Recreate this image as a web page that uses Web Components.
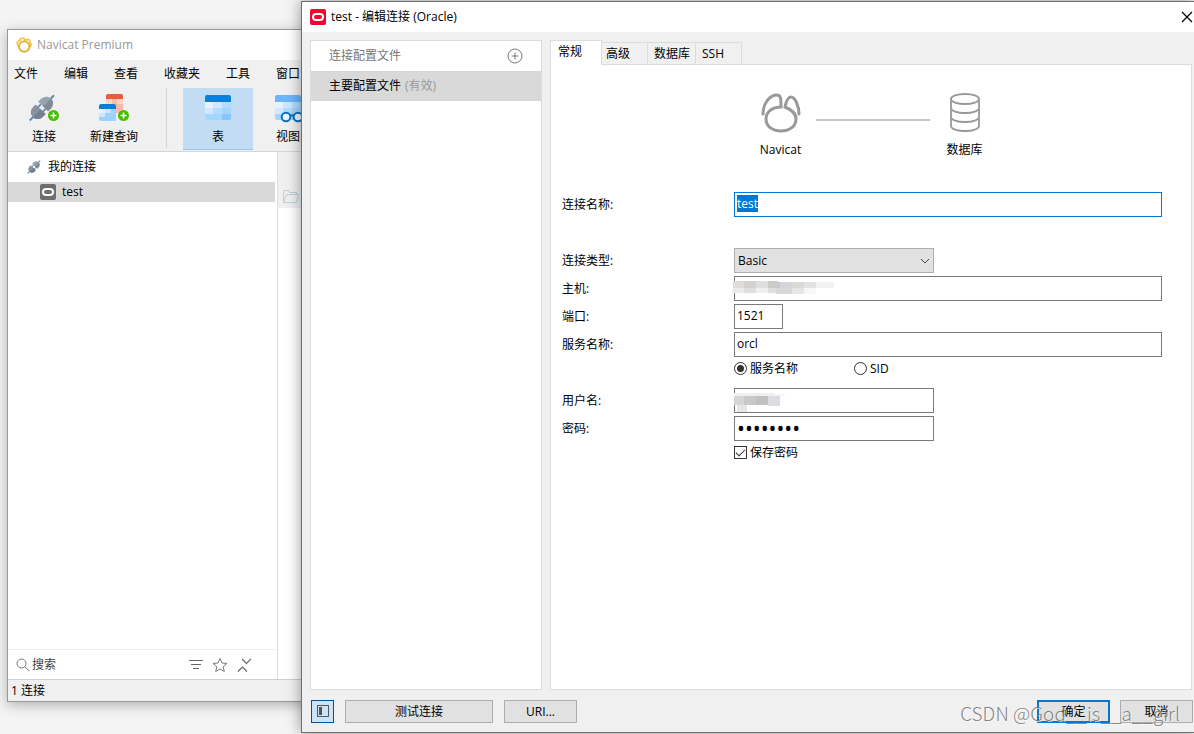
<!DOCTYPE html>
<html lang="zh-CN">
<head>
<meta charset="utf-8">
<meta name="viewport" content="width=device-width, initial-scale=1">
<title>Navicat Premium</title>
<style>
html, body { margin: 0; height: 100%; }
body {
  position: relative; overflow: hidden; background: #f4f4f4; color: #000;
  font: 12px/16px "Open Sans", "Noto Sans CJK SC", sans-serif;
}
main-window { position: absolute; inset: 29px 0 32px 7px; }
connection-dialog { position: absolute; inset: 1px 0 1px 301px; }
water-mark { position: absolute; right: 14px; bottom: 7px; }
</style>
</head>
<body>
<main-window></main-window>
<connection-dialog></connection-dialog>
<water-mark>CSDN @God__is__a__girl</water-mark>

<script>
class Base extends HTMLElement {
  constructor() {
    super();
    this.attachShadow({ mode: 'open' });
  }
  connectedCallback() {
    if (this.shadowRoot.childNodes.length) return;
    this.shadowRoot.innerHTML = '<style>*{box-sizing:border-box}:host([hidden]){display:none}</style>' + this.render();
    this.ready();
  }
  attr(name, fallback = '') { return this.getAttribute(name) ?? fallback; }
  ready() {}
}
const define = (name, cls) => customElements.define(name, cls);

/* ---------- icons ---------- */
const paw = 'M2 21C2 10 9 2 16 2C20 2 20 6 20 14C11 14 5 19 5 26C5 33 11 38 20 38C29 38 35 33 35 26C35 20 31 17 24 14C25 9 27 4 30 4C34 4 38 13 38 21';
const plug = `
  <g transform="rotate(-46 14 14)">
    <path d="M-5 14h6M27 14h6" stroke="#5b8db8" stroke-width="2.2"/>
    <path d="M11 10.500h5M11 17.500h5" stroke="#5b8db8" stroke-width="2"/>
    <path d="M12 6.500v15H8C3.500 21.500 0 18.500 0 14s3.500-7.500 8-7.500z" fill="#8793a0"/>
    <path d="M12 14v7.500H8C3.500 21.500 0 18.500 0 14z" fill="#74818e"/>
    <path d="M16 6.500v15h4c4.500 0 8-3 8-7.500s-3.500-7.500-8-7.500z" fill="#98a3ae"/>
    <path d="M16 14v7.500h4c4.500 0 8-3 8-7.500z" fill="#7f8c98"/>
  </g>`;
const plus = (x, y) => `<circle cx="${x}" cy="${y}" r="5.500" fill="#43c000"/><path d="M${x - 3} ${y}h6M${x} ${y - 3}v6" stroke="#fff" stroke-width="1.500"/>`;
const grid = `
  <path d="M0 7h26v16a2 2 0 0 1-2 2H2a2 2 0 0 1-2-2z" fill="#a3d5ff"/>
  <path d="M0 7h8.500v6H0z" fill="#e6f3ff"/><path d="M8.500 7H17v6H8.500zM0 13h8.500v6H0z" fill="#cfe8ff"/>
  <path d="M17 7h9v6h-9zM8.500 13H17v6H8.500z" fill="#b3dbff"/><path d="M17 19h9v4a2 2 0 0 1-2 2h-7z" fill="#85c4fc"/>`;
const icons = {
  navicat: ['0 0 40 40', `<path d="${paw}" fill="none" stroke="#999" stroke-width="3" stroke-linecap="round"/>`],
  logo: ['0 0 16 16', `<g fill="none" stroke-width="1.900"><path d="M3.200 9.200C0 7.500 .8 3.600 3.900 3.600C4.300 .4 9.200 .2 9 4M9.200 3.600C11.500 1.200 14.500 3 13.600 5.200C15.800 6.600 15.200 9.500 13.400 10.200" stroke="#f3cb4c"/><circle cx="8.200" cy="9.600" r="5.200" stroke="#e3b23c"/></g>`],
  database: ['0 0 30 40', `<g fill="none" stroke="#999" stroke-width="1.800"><ellipse cx="15" cy="6" rx="14" ry="5"/><path d="M1 6v27c0 2.800 6.300 5 14 5s14-2.200 14-5V6M1 15c0 2.800 6.300 5 14 5s14-2.200 14-5M1 24c0 2.800 6.300 5 14 5s14-2.200 14-5"/></g>`],
  connect: ['0 0 32 30', `<g transform="translate(1 1) scale(.92)">${plug}</g>${plus(25.5, 21.5)}`],
  plug: ['-3 -3 34 34', plug],
  query: ['0 0 32 30', `
    <path d="M8 5h17v12a2 2 0 0 1-2 2H8z" fill="#ffb8a3"/><path d="M8 5h6v6H8zM19 5h6v5h-6z" fill="#ffd5c9"/>
    <path d="M10 0h13a2 2 0 0 1 2 2v3H8V2a2 2 0 0 1 2-2z" fill="#e85c3b"/>
    <path d="M1 15h17v12H3a2 2 0 0 1-2-2z" fill="#9bd1ff"/><path d="M1 15h6v4H1z" fill="#e6f3ff"/><path d="M7 15h6v4H7zM1 19h6v4H1z" fill="#cbe6ff"/>
    <path d="M3 10h13a2 2 0 0 1 2 2v3H1v-3a2 2 0 0 1 2-2z" fill="#0b7ed6"/>${plus(25.5, 21.5)}`],
  table: ['-3 -1 32 30', `${grid}<path d="M2 0h22a2 2 0 0 1 2 2v5H0V2a2 2 0 0 1 2-2z" fill="#0a80d8"/>`],
  view: ['-3 -1 32 30', `${grid}<path d="M2 0h22a2 2 0 0 1 2 2v5H0V2a2 2 0 0 1 2-2z" fill="#6bb7fb"/>
    <g fill="#f0f8ff" stroke="#0a72c4" stroke-width="2"><circle cx="11" cy="22" r="4.300"/><circle cx="23" cy="22" r="4.300"/><path d="M15 21q2-1.500 4 0" fill="none"/></g>`],
  oracle: ['0 0 16 16', `<rect width="16" height="16" rx="2" fill="#f8002f"/><rect x="3" y="5" width="10" height="6" rx="3" fill="none" stroke="#fff" stroke-width="2"/>`],
  oraclegray: ['0 0 16 16', `<rect width="16" height="16" rx="2" fill="#6e6e6e"/><rect x="3" y="5" width="10" height="6" rx="3" fill="none" stroke="#fff" stroke-width="2"/>`],
  folder: ['0 0 16 16', `<path d="M.5 14.500v-12h5l1 2h7v2M.5 14.500l3-8h12l-2 8z" fill="none" stroke="#bcd0dd"/>`],
  search: ['0 0 14 14', `<g fill="none" stroke="#777"><circle cx="5.500" cy="5.500" r="4.500"/><path d="M9 9l4.500 4"/></g>`],
  filter: ['0 0 14 14', `<path d="M0 2.500h14M2 6.500h10M4 10.500h6" stroke="#666"/>`],
  star: ['0 0 16 16', `<path d="M8 1.500l2 4.500 4.800.4-3.700 3.200 1.200 4.900L8 12l-4.300 2.500 1.200-4.900L1.200 6.400 6 6z" fill="none" stroke="#777"/>`],
  collapse: ['0 0 14 14', `<path d="M5 1l4.500 4.500L14 1M1 13.500L5.500 9l4.500 4.500" fill="none" stroke="#666" stroke-width="1.200"/>`],
  add: ['0 0 16 16', `<g fill="none" stroke="#777"><circle cx="8" cy="8" r="7"/><path d="M4.500 8h7M8 4.500v7"/></g>`],
  close: ['0 0 12 12', `<path d="M1 1l10 10M11 1L1 11" stroke="#000" stroke-width="1.200"/>`],
  panel: ['0 0 12 12', `<rect x=".5" y=".5" width="11" height="11" fill="none" stroke="#555"/><path d="M2 2h3v8H2z" fill="#555"/>`],
  chevron: ['0 0 10 6', `<path d="M1 1l4 4 4-4" fill="none" stroke="#444"/>`]
};
define('ui-icon', class extends Base {
  render() {
    const [box, body] = icons[this.attr('name')];
    return `<style>:host{display:block;flex:none;width:16px;height:16px}svg{display:block;width:100%;height:100%}</style>
      <svg viewBox="${box}" aria-hidden="true">${body}</svg>`;
  }
});

/* ---------- main window ---------- */
define('tool-item', class extends Base {
  render() {
    return `<style>
      :host{display:block;flex:none;width:70px}
      button{width:100%;height:62px;padding:6px 0 0;border:0;border-bottom:1px solid transparent;background:none;
        font:inherit;color:inherit;display:flex;flex-direction:column;align-items:center;gap:5px;white-space:nowrap}
      :host([active]) button{background:#c2ddf3;border-color:#8fc8f7}
      ui-icon{width:32px;height:30px}
    </style><button type="button"><ui-icon name="${this.attr('icon')}"></ui-icon><slot></slot></button>`;
  }
});
define('tree-item', class extends Base {
  render() {
    return `<style>
      :host{display:flex;align-items:center;gap:6px;height:20px;padding-left:18px}
      :host([child]){padding-left:32px}
      :host([selected]){background:#d9d9d9}
    </style><ui-icon name="${this.attr('icon')}"></ui-icon><slot></slot>`;
  }
});
define('main-window', class extends Base {
  render() {
    return `<style>
      :host{display:flex;flex-direction:column;border:1px solid #999;border-right:0;background:#f0f0f0;box-shadow:0 3px 12px rgba(0,0,0,.28)}
      header{display:flex;align-items:center;gap:5px;height:30px;padding-left:8px;background:#fff;color:#999}
      nav{display:flex;align-items:center;gap:26px;height:28px;padding-left:6px;white-space:nowrap}
      nav a{color:inherit;text-decoration:none}
      .tools{display:flex;height:64px;padding-left:1px;border-bottom:1px solid #d5d5d5}
      .tools i{flex:none;width:1px;height:60px;margin:0 16px 0 17px;background:#d5d5d5}
      .body{flex:1;display:flex;min-height:0}
      aside{display:flex;flex-direction:column;width:270px;background:#fff;border-right:1px solid #dedede}
      .tree{flex:1;display:flex;flex-direction:column;gap:5px;padding:5px 2px 0 0}
      .find{display:flex;align-items:center;height:30px;margin-right:2px;padding:0 24px 0 8px;border-top:1px solid #ececec}
      .find input{flex:1;min-width:0;margin:0 2px;padding:0;border:0;background:none;font:inherit;outline:0}
      .find input::placeholder{color:#444;opacity:1}
      .find button{padding:0;margin-left:9px;border:0;background:none}
      .search,.filter{width:14px;height:14px}
      main{flex:1;background:#fff}
      .bar{display:flex;align-items:end;height:56px;padding:0 0 4px 5px;background:#f0f0f0}
      footer{height:22px;padding:3px 3px 0;border-top:1px solid #cfcfcf}
    </style>
    <header><ui-icon name="logo"></ui-icon>Navicat Premium</header>
    <nav><a href="#">文件</a><a href="#">编辑</a><a href="#">查看</a><a href="#">收藏夹</a><a href="#">工具</a><a href="#">窗口</a></nav>
    <div class="tools">
      <tool-item icon="connect">连接</tool-item><tool-item icon="query">新建查询</tool-item><i></i>
      <tool-item icon="table" active>表</tool-item><tool-item icon="view">视图</tool-item>
    </div>
    <div class="body">
      <aside>
        <div class="tree"><tree-item icon="plug">我的连接</tree-item><tree-item icon="oraclegray" child selected>test</tree-item></div>
        <div class="find"><ui-icon class="search" name="search"></ui-icon><input aria-label="搜索" placeholder="搜索">
          <button type="button" aria-label="筛选"><ui-icon class="filter" name="filter"></ui-icon></button>
          <button type="button" aria-label="收藏"><ui-icon name="star"></ui-icon></button>
          <button type="button" aria-label="折叠"><ui-icon class="filter" name="collapse"></ui-icon></button></div>
      </aside>
      <main><div class="bar"><ui-icon name="folder"></ui-icon></div></main>
    </div>
    <footer>1 连接</footer>`;
  }
});

/* ---------- dialog ---------- */
define('push-button', class extends Base {
  render() {
    return `<style>
      :host{display:block;width:73px}
      :host([wide]){width:148px}
      :host([square]){width:23px}
      button{display:flex;align-items:center;justify-content:center;width:100%;height:23px;padding:2px 0 0;border:1px solid #adadad;background:#e1e1e1;font:inherit;color:inherit}
      :host([primary]) button{border:2px solid #0078d7}
      :host([square]) button{padding:0;border-color:#00549a;background:#cce4f7}
      ::slotted(ui-icon){width:12px;height:12px}
    </style><button type="button" aria-label="${this.attr('label', this.textContent.trim())}"><slot></slot></button>`;
  }
});

const smudges = {
  host: [[0,5,11,7,'#dedcda'],[11,5,12,7,'#d3d2d0'],[23,5,12,7,'#dedfe1'],[35,5,10,7,'#cccbc8'],[45,6,2,6,'#c9c8c6'],[47,6,12,6,'#d4d5da'],[59,6,12,6,'#dadad8'],[71,6,12,6,'#e2e2e2'],[83,6,18,6,'#f2f2f2'],
    [0,12,11,5,'#ecebe9'],[11,12,12,5,'#e0dfde'],[23,12,12,5,'#efefef'],[35,12,8,5,'#dededd'],[43,12,16,6,'#d8d8d8'],[59,12,12,6,'#e6e6e5'],[71,12,12,6,'#f7f7f7']],
  user: [[1,5,40,3,'#efefef'],[41,6,11,2,'#f6f6f6'],[1,8,10,9,'#d6d5d5'],[11,8,12,9,'#c8c9ca'],[23,8,12,9,'#c4c0c1'],[35,8,12,10,'#dcdce2'],[4,17,10,7,'#e6e6e6']]
};
define('form-field', class extends Base {
  render() {
    const size = this.attr('size', 'full');
    const smudge = smudges[this.attr('mask')];
    const type = this.attr('type', 'text');
    const control = type === 'select'
      ? `<select id="f"><option>${this.attr('value')}</option></select><ui-icon name="chevron"></ui-icon>`
      : `<input id="f" type="${type}" value="${this.attr('value')}" autocomplete="off">`;
    return `<style>
      :host{display:grid;grid-template-columns:172px minmax(0,1fr);align-items:center;height:25px}
      .box{position:relative;width:100%;height:25px}
      .medium{width:200px}.small{width:49px}
      input,select{display:block;width:100%;height:25px;margin:0;padding:0 2px 2px;border:1px solid #7a7a7a;border-radius:0;background:#fff;color:#000;font:inherit;outline:0}
      select{appearance:none;padding:0 3px;border-color:#adadad;background:#e1e1e1}
      input[type=password]{font-size:21px}
      input:focus{border-color:#0078d7}
      input::selection{background:#0078d7;color:#fff}
      ui-icon{position:absolute;right:4px;top:10px;width:10px;height:6px;pointer-events:none}
      svg{position:absolute;left:-1px;top:0;pointer-events:none}
    </style>
    <label for="f">${this.attr('label')}</label>
    <div class="box ${size}">${control}${smudge ? `<svg width="102" height="25" aria-hidden="true">${smudge.map(([x, y, w, h, c]) => `<rect x="${x}" y="${y}" width="${w}" height="${h}" fill="${c}"/>`).join('')}</svg>` : ''}</div>`;
  }
  ready() {
    if (!this.hasAttribute('focused')) return;
    const input = this.shadowRoot.querySelector('input');
    input.focus();
    input.select();
  }
});
define('choice-row', class extends Base {
  render() {
    const type = this.attr('type');
    const labels = this.attr('options').split(',');
    return `<style>
      :host{display:flex;align-items:flex-start;height:25px;padding-left:172px}
      label{display:flex;align-items:center;gap:3px;width:120px;height:17px}
      input{appearance:none;flex:none;display:grid;place-items:center;width:13px;height:13px;margin:0;border:1px solid #333;background:#fff}
      input[type=radio]{border-radius:50%}
      input[type=radio]:checked::after{content:"";width:7px;height:7px;border-radius:50%;background:#333}
      input[type=checkbox]:checked::after{content:"";width:8px;height:4px;border:solid #333;border-width:0 0 1px 1px;transform:translateY(-1px) rotate(-45deg)}
    </style>${labels.map((t, i) => `<label><input type="${type}" name="choice"${i ? '' : ' checked'}>${t}</label>`).join('')}`;
  }
});
define('link-diagram', class extends Base {
  render() {
    return `<style>
      :host{display:flex;justify-content:center;gap:11px}
      figure{display:flex;flex-direction:column;align-items:center;gap:9px;width:48px;margin:0}
      ui-icon{width:40px;height:40px}
      i{width:114px;height:2px;margin-top:26px;background:#c6c6c6}
    </style>
    <figure><ui-icon name="navicat"></ui-icon><figcaption>Navicat</figcaption></figure><i></i>
    <figure><ui-icon name="database"></ui-icon><figcaption>数据库</figcaption></figure>`;
  }
});
define('tab-strip', class extends Base {
  render() {
    return `<style>
      :host{display:flex;align-items:flex-end;height:24px}
      button{width:48px;height:22px;padding:0 0 0 6px;border:1px solid #dcdcdc;border-width:1px 1px 0 0;background:#f0f0f0;font:inherit;color:inherit;text-align:left}
      [aria-selected=true]{width:52px;height:25px;margin-bottom:-1px;padding:0 0 2px 7px;border-left-width:1px;background:#fff}
      .short{width:46px;padding-left:4px}
      .last{width:46px}
    </style><button type="button" role="tab" aria-selected="true">常规</button><button type="button" role="tab" class="short">高级</button><button type="button" role="tab">数据库</button><button type="button" role="tab" class="last">SSH</button>`;
  }
});
define('connection-dialog', class extends Base {
  render() {
    return `<style>
      :host{display:flex;flex-direction:column;border:1px solid #6e6e6e;border-right:0;background:#f0f0f0;box-shadow:0 0 14px rgba(0,0,0,.4)}
      header{display:flex;align-items:center;gap:5px;height:30px;padding:0 1px 0 8px;background:#fff}
      header button,.head button{margin-left:auto;padding:0;border:0;background:none}
      header button ui-icon{width:12px;height:12px}
      .body{flex:1;display:flex;gap:8px;min-height:0;padding:8px 2px 0 8px}
      aside{width:232px;border:1px solid #dcdcdc;background:#fff}
      aside div{display:flex;align-items:center;height:30px;padding:0 18px}
      .head{color:#777}
      .current{gap:4px;background:#d9d9d9}
      .current span{color:#999}
      section{flex:1;display:flex;flex-direction:column;min-width:0}
      tab-strip{position:relative}
      form{flex:1;display:flex;flex-direction:column;gap:3px;padding:28px 29px 0 11px;border:1px solid #dcdcdc;background:#fff}
      link-diagram{margin:0 -29px 31px -8px}
      .name{margin-bottom:28px}
      footer{display:flex;align-items:center;height:42px;padding:0 1px 0 9px;gap:11px}
      .end{display:flex;gap:10px;margin-left:auto}
    </style>
    <header><ui-icon name="oracle"></ui-icon>test - 编辑连接 (Oracle)<button type="button" aria-label="关闭"><ui-icon name="close"></ui-icon></button></header>
    <div class="body">
      <aside>
        <div class="head">连接配置文件<button type="button" aria-label="新建"><ui-icon name="add"></ui-icon></button></div>
        <div class="current">主要配置文件<span>(有效)</span></div>
      </aside>
      <section>
        <tab-strip role="tablist"></tab-strip>
        <form>
          <link-diagram></link-diagram>
          <form-field class="name" label="连接名称:" value="test" focused></form-field>
          <form-field label="连接类型:" type="select" size="medium" value="Basic"></form-field>
          <form-field label="主机:" mask="host"></form-field>
          <form-field label="端口:" size="small" value="1521"></form-field>
          <form-field label="服务名称:" value="orcl"></form-field>
          <choice-row type="radio" options="服务名称,SID"></choice-row>
          <form-field label="用户名:" size="medium" mask="user"></form-field>
          <form-field label="密码:" size="medium" type="password" value="password"></form-field>
          <choice-row type="checkbox" options="保存密码"></choice-row>
        </form>
      </section>
    </div>
    <footer>
      <push-button square label="侧栏"><ui-icon name="panel"></ui-icon></push-button>
      <push-button wide>测试连接</push-button>
      <push-button>URI...</push-button>
      <div class="end"><push-button primary>确定</push-button><push-button>取消</push-button></div>
    </footer>`;
  }
});
define('water-mark', class extends Base {
  render() {
    return `<style>:host{display:block;font:300 19px/28px "Noto Sans CJK SC",sans-serif;color:rgba(120,120,120,.9);text-shadow:1px 1px 0 rgba(255,255,255,.6);white-space:nowrap;pointer-events:none}</style><slot></slot>`;
  }
});
</script>
</body>
</html>
